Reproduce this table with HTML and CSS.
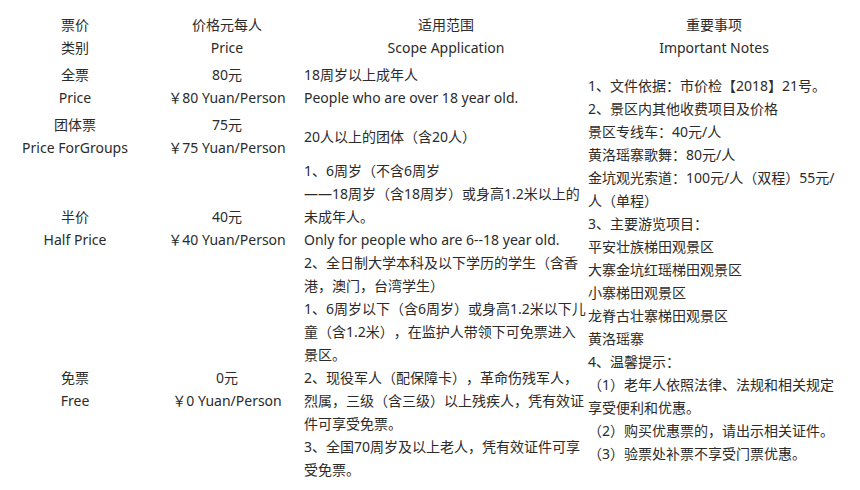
FILE: index.html
```html
<!DOCTYPE html>
<html lang="zh-CN">
<head>
<meta charset="utf-8">
<title>门票价格</title>
<link rel="stylesheet" href="styles.css">
</head>
<body>
<table class="tickets">
  <colgroup>
    <col class="col-type">
    <col class="col-price">
    <col class="col-scope">
    <col class="col-notes">
  </colgroup>
  <thead>
    <tr class="row-pad">
      <th>票价<br>类别</th>
      <th>价格元每人<br>Price</th>
      <th>适用范围<br>Scope Application</th>
      <th>重要事项<br>Important Notes</th>
    </tr>
  </thead>
  <tbody>
    <tr class="row-pad">
      <td class="center">全票<br>Price</td>
      <td class="center">80元<br>￥80 Yuan/Person</td>
      <td>18周岁以上成年人<br>People who are over 18 year old.</td>
      <td class="notes" rowspan="4">1、文件依据：市价检【2018】21号。<br>2、景区内其他收费项目及价格<br>景区专线车：40元/人<br>黄洛瑶寨歌舞：80元/人<br>金坑观光索道：100元/人（双程）55元/人（单程）<br>3、主要游览项目：<br>平安壮族梯田观景区<br>大寨金坑红瑶梯田观景区<br>小寨梯田观景区<br>龙脊古壮寨梯田观景区<br>黄洛瑶寨<br>4、温馨提示：<br>（1）老年人依照法律、法规和相关规定享受便利和优惠。<br>（2）购买优惠票的，请出示相关证件。<br>（3）验票处补票不享受门票优惠。</td>
    </tr>
    <tr class="row-pad row-last-pad">
      <td class="center">团体票<br>Price ForGroups</td>
      <td class="center">75元<br>￥75 Yuan/Person</td>
      <td>20人以上的团体（含20人）</td>
    </tr>
    <tr>
      <td class="center">半价<br>Half Price</td>
      <td class="center">40元<br>￥40 Yuan/Person</td>
      <td>1、6周岁（不含6周岁<br>——18周岁（含18周岁）或身高1.2米以上的未成年人。<br>Only for people who are 6--18 year old.<br>2、全日制大学本科及以下学历的学生（含香港，澳门，台湾学生）</td>
    </tr>
    <tr>
      <td class="center">免票<br>Free</td>
      <td class="center">0元<br>￥0 Yuan/Person</td>
      <td>1、6周岁以下（含6周岁）或身高1.2米以下儿童（含1.2米），在监护人带领下可免票进入景区。<br>2、现役军人（配保障卡），革命伤残军人，烈属，三级（含三级）以上残疾人，凭有效证件可享受免票。<br>3、全国70周岁及以上老人，凭有效证件可享受免票。</td>
    </tr>
  </tbody>
</table>
</body>
</html>
```

FILE: styles.css
```css
html, body {
  margin: 0;
  padding: 0;
  background: #ffffff;
}

body {
  font-family: "Noto Sans", "Noto Sans CJK SC", sans-serif;
  font-size: 14px;
  line-height: 23px;
  color: #2b2b2b;
  text-spacing-trim: space-all;
}

.tickets {
  margin-top: 11px;
  width: 840px;
  table-layout: fixed;
  border-collapse: collapse;
  border-spacing: 0;
}

.col-type { width: 150px; }
.col-price { width: 154px; }
.col-scope { width: 284px; }
.col-notes { width: 252px; }

.tickets th,
.tickets td {
  padding: 0;
  vertical-align: middle;
  text-align: left;
  font-weight: normal;
}

.tickets th {
  text-align: center;
}

.tickets .center {
  text-align: center;
}

.row-pad > th,
.row-pad > td {
  padding-top: 2px;
  padding-bottom: 2px;
}

.row-last-pad > td {
  padding-bottom: 0;
}

.tickets .notes {
  padding: 0 0 3px 0;
}
```
